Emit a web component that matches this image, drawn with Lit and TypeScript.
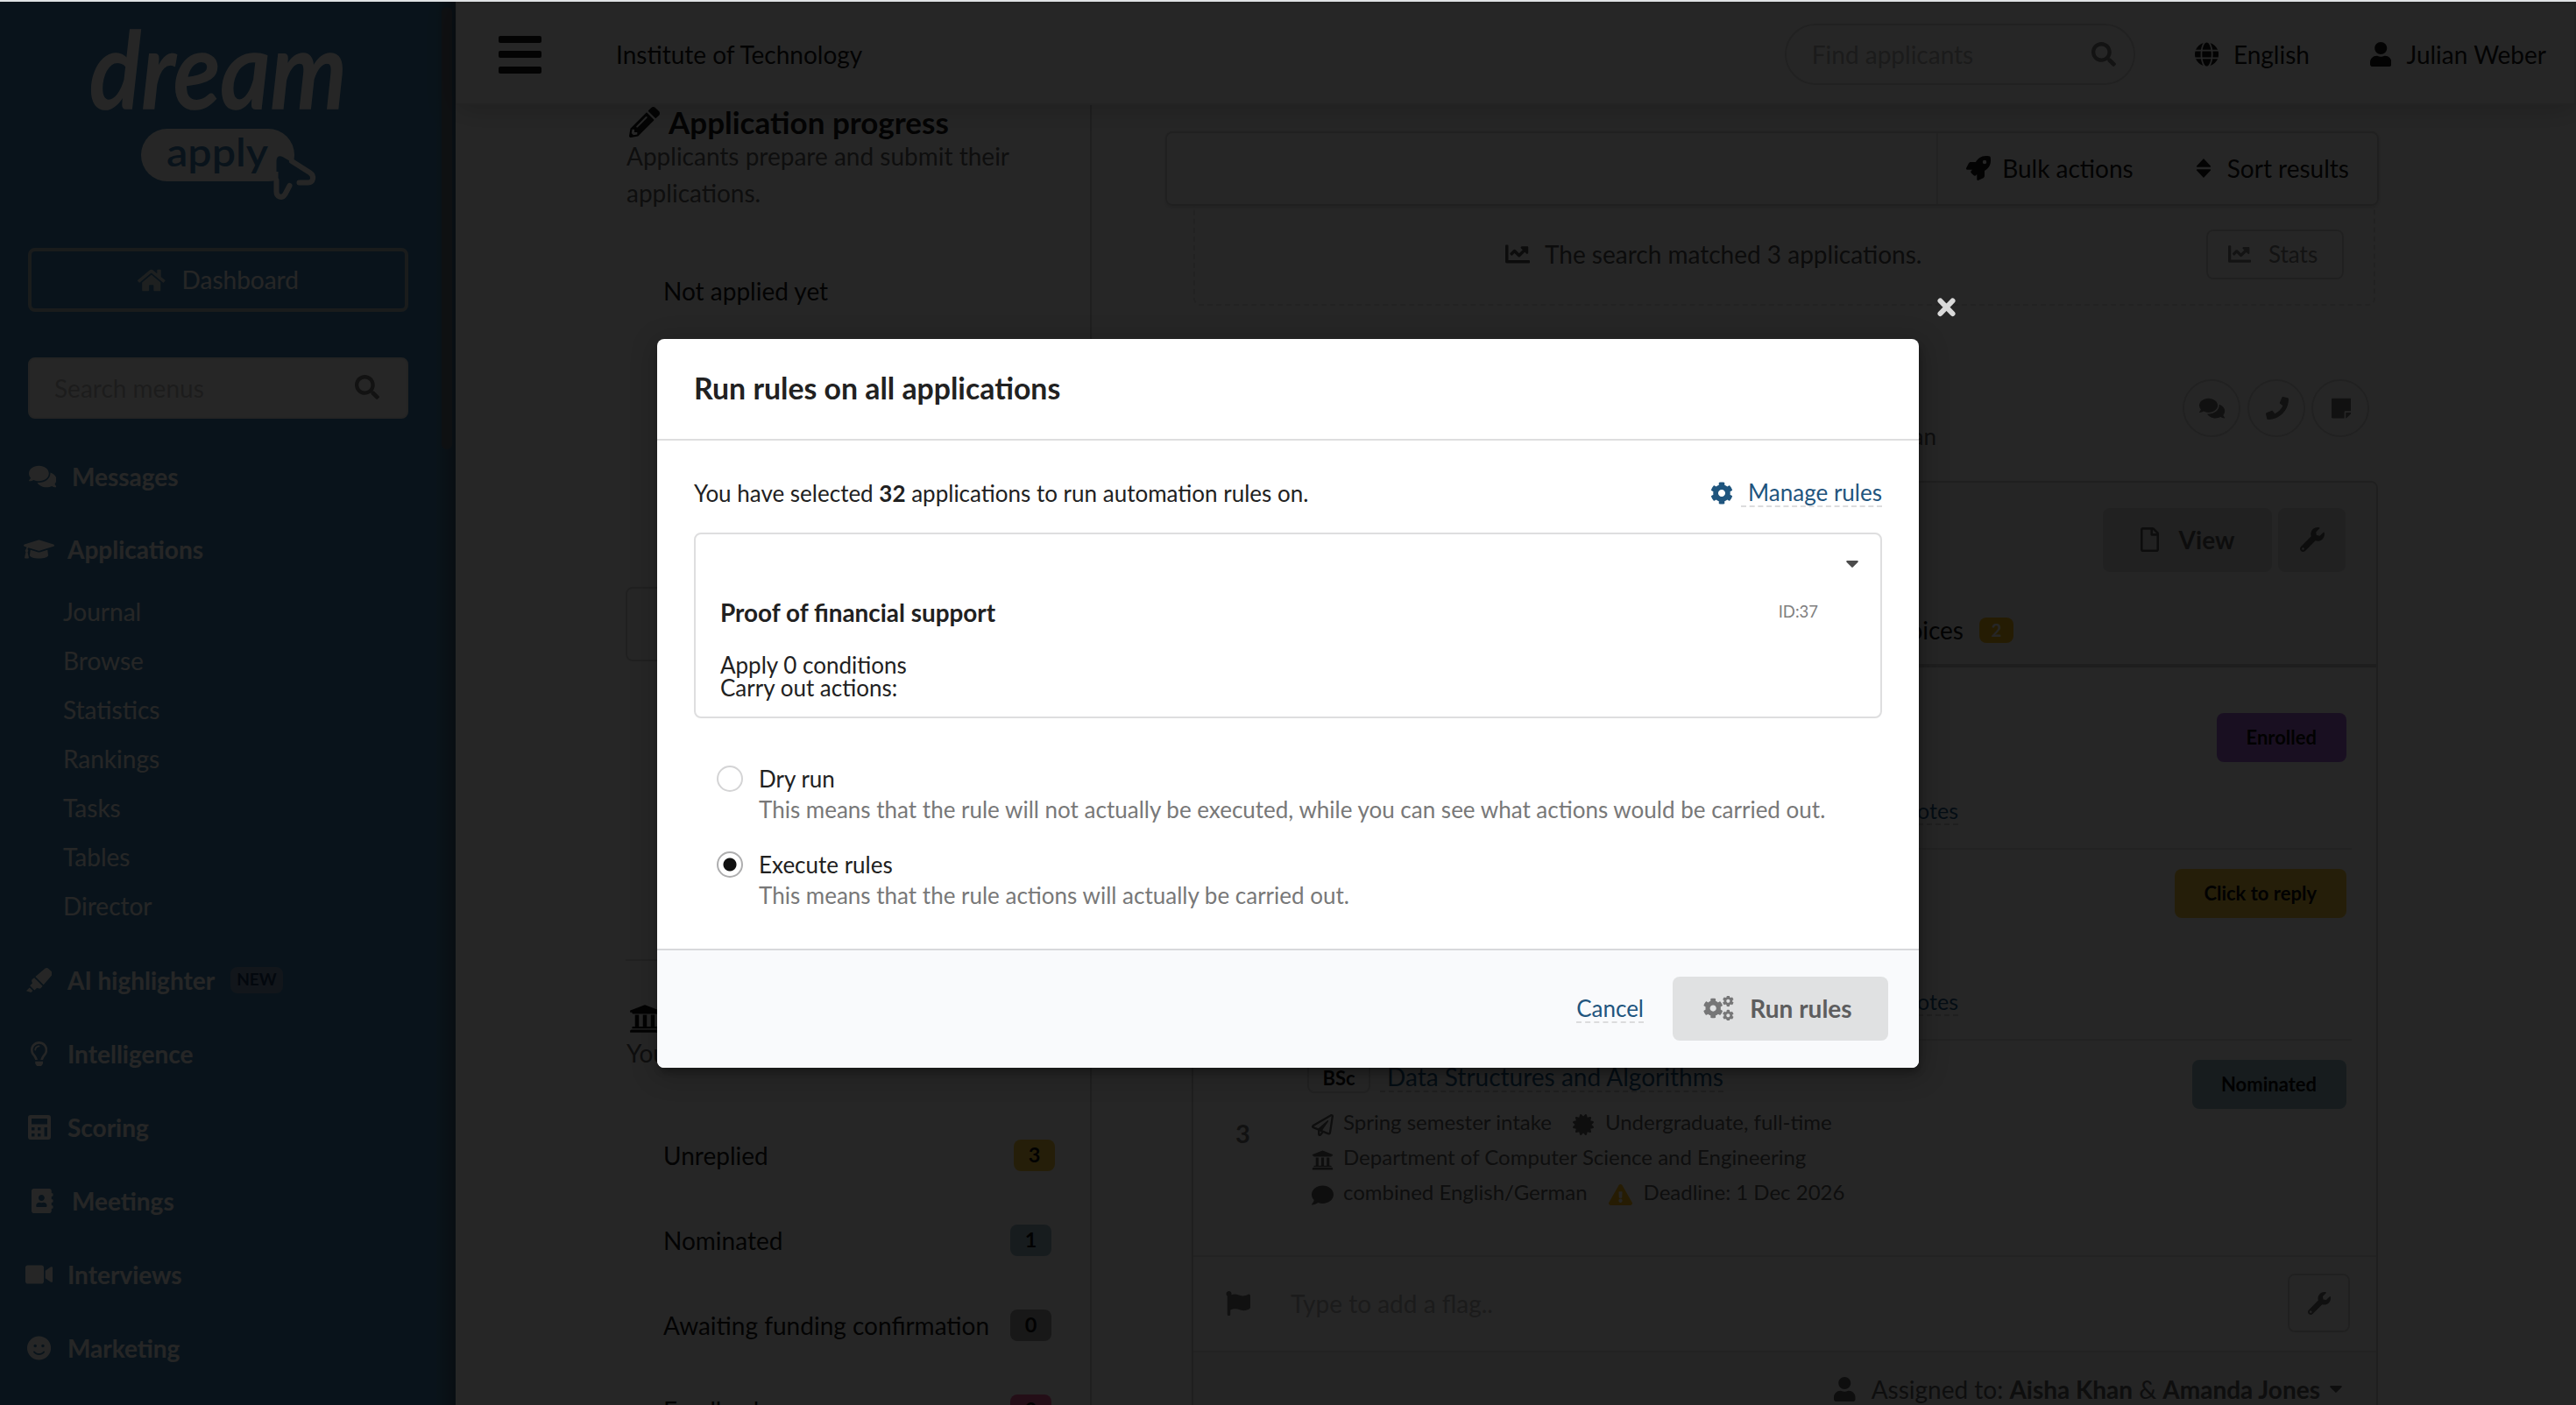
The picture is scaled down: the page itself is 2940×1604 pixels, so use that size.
import { LitElement, html, css, svg, nothing } from "lit";
import { customElement, property } from "lit/decorators.js";

const COG =
  "M487.4 315.7l-42.6-24.6c4.3-23.2 4.3-47 0-70.2l42.6-24.6c4.9-2.8 7.1-8.6 5.5-14-11.1-35.6-30-67.8-54.7-94.6-3.8-4.1-10-5.1-14.8-2.3L380.8 110c-17.9-15.4-38.5-27.3-60.8-35.1V25.8c0-5.6-3.9-10.5-9.4-11.7-36.7-8.2-74.3-7.8-109.2 0-5.5 1.2-9.4 6.1-9.4 11.7V75c-22.2 7.9-42.8 19.8-60.8 35.1L88.7 85.5c-4.9-2.8-11-1.9-14.8 2.3-24.7 26.7-43.6 58.9-54.7 94.6-1.7 5.4.6 11.2 5.5 14L67.3 221c-4.3 23.2-4.3 47 0 70.2l-42.6 24.6c-4.9 2.8-7.1 8.6-5.5 14 11.1 35.6 30 67.8 54.7 94.6 3.8 4.1 10 5.1 14.8 2.3l42.6-24.6c17.9 15.4 38.5 27.3 60.8 35.1v49.2c0 5.6 3.9 10.5 9.4 11.7 36.7 8.2 74.3 7.8 109.2 0 5.5-1.2 9.4-6.1 9.4-11.7v-49.2c22.2-7.9 42.8-19.8 60.8-35.1l42.6 24.6c4.9 2.8 11 1.9 14.8-2.3 24.7-26.7 43.6-58.9 54.7-94.6 1.5-5.5-.7-11.3-5.6-14.1zM256 336c-44.1 0-80-35.9-80-80s35.9-80 80-80 80 35.9 80 80-35.9 80-80 80z";

/* name -> [viewBox, path data] */
const ICONS: Record<string, [string, string]> = {
  search: ["0 0 512 512", "M505 442.7L405.3 343c-4.5-4.5-10.6-7-17-7H372c27.6-35.3 44-79.7 44-128C416 93.1 322.9 0 208 0S0 93.1 0 208s93.1 208 208 208c48.3 0 92.7-16.4 128-44v16.3c0 6.4 2.5 12.5 7 17l99.7 99.7c9.4 9.4 24.6 9.4 33.9 0l28.3-28.3c9.4-9.4 9.4-24.6.1-34zM208 336c-70.7 0-128-57.2-128-128 0-70.7 57.2-128 128-128 70.7 0 128 57.2 128 128 0 70.7-57.2 128-128 128z"],
  user: ["0 0 448 512", "M224 256c70.7 0 128-57.3 128-128S294.7 0 224 0 96 57.3 96 128s57.3 128 128 128zm89.6 32h-16.7c-22.2 10.2-46.9 16-72.9 16s-50.6-5.8-72.9-16h-16.7C60.2 288 0 348.2 0 422.4V464c0 26.5 21.5 48 48 48h352c26.5 0 48-21.5 48-48v-41.6c0-74.2-60.2-134.4-134.4-134.4z"],
  comments: ["0 0 576 512", "M416 192c0-88.4-93.1-160-208-160S0 103.6 0 192c0 34.3 14.1 65.9 38 92-13.4 30.2-35.5 54.2-35.8 54.5-2.2 2.3-2.8 5.7-1.5 8.7S4.8 352 8 352c36.6 0 66.9-12.3 88.7-25 32.2 15.7 70.3 25 111.3 25 114.9 0 208-71.6 208-160zm122 220c23.9-26 38-57.7 38-92 0-66.9-53.5-124.2-129.3-148.1.9 6.6 1.3 13.3 1.3 20.1 0 105.9-107.7 192-240 192-10.8 0-21.3-.8-31.7-1.9C207.8 439.6 281.8 480 368 480c41 0 79.1-9.2 111.3-25 21.8 12.7 52.1 25 88.7 25 3.2 0 6.1-1.9 7.3-4.8 1.3-2.9.7-6.3-1.5-8.7-.3-.3-22.4-24.2-35.8-54.5z"],
  comment: ["0 0 512 512", "M256 32C114.6 32 0 125.1 0 240c0 49.6 21.4 95 57 130.7C44.5 421.1 2.7 466 2.2 466.5c-2.2 2.3-2.8 5.7-1.5 8.7S4.8 480 8 480c66.3 0 116-31.8 140.6-51.4 32.7 12.3 69 19.4 107.4 19.4 141.4 0 256-93.1 256-208S397.4 32 256 32z"],
  cap: ["0 0 640 512", "M622.34 153.2L343.4 67.5c-15.2-4.67-31.6-4.67-46.79 0L17.66 153.2c-23.54 7.23-23.54 38.36 0 45.59l48.63 14.94c-10.67 13.19-17.23 29.28-17.88 46.9C38.78 266.15 32 276.11 32 288c0 10.78 5.68 19.85 13.86 25.65L20.33 428.53C18.11 438.52 25.71 448 35.94 448h56.11c10.24 0 17.84-9.48 15.62-19.47L82.14 313.65C90.32 307.85 96 298.78 96 288c0-11.57-6.47-21.25-15.66-26.87.76-15.02 8.44-28.3 20.69-36.72L296.6 284.5c9.06 2.78 26.44 6.25 46.79 0l278.95-85.7c23.55-7.24 23.55-38.36 0-45.6zM352.79 315.09c-28.53 8.76-52.84 3.92-65.59 0l-145.02-44.55L128 384c0 35.35 85.96 64 192 64s192-28.65 192-64l-14.18-113.47-145.03 44.56z"],
  home: ["0 0 576 512", "M280.37 148.26L96 300.11V464a16 16 0 0 0 16 16l112.06-.29a16 16 0 0 0 15.92-16V368a16 16 0 0 1 16-16h64a16 16 0 0 1 16 16v95.64a16 16 0 0 0 16 16.05L464 480a16 16 0 0 0 16-16V300L295.67 148.26a12.19 12.19 0 0 0-15.3 0zM571.6 251.47L488 182.56V44.05a12 12 0 0 0-12-12h-56a12 12 0 0 0-12 12v72.61L318.47 43a48 48 0 0 0-61 0L4.34 251.47a12 12 0 0 0-1.6 16.9l25.5 31A12 12 0 0 0 45.15 301l235.22-193.74a12.19 12.19 0 0 1 15.3 0L530.9 301a12 12 0 0 0 16.9-1.6l25.5-31a12 12 0 0 0-1.7-16.93z"],
  highlighter: ["0 0 544 512", "M0 479.98L99.92 512l35.45-35.45-67.04-67.04L0 479.98zm124.61-240.01a36.592 36.592 0 0 0-10.79 38.1l13.05 42.83-50.93 50.94 96.23 96.23 50.86-50.86 42.74 13.08c13.73 4.2 28.65-.01 38.15-10.78l35.55-41.64-173.34-173.34-41.52 35.44zm403.31-160.7l-63.2-63.2c-20.49-20.49-53.38-21.52-75.12-2.35L190.55 183.68l169.77 169.78L530.27 154.4c19.18-21.74 18.15-54.63-2.35-75.13z"],
  bulb: ["0 0 352 512", "M176 80c-52.94 0-96 43.06-96 96 0 8.84 7.16 16 16 16s16-7.16 16-16c0-35.3 28.72-64 64-64 8.84 0 16-7.16 16-16s-7.16-16-16-16zM96.06 459.17c0 3.15.93 6.22 2.68 8.84l24.51 36.84c2.97 4.46 7.97 7.14 13.32 7.14h78.85c5.36 0 10.36-2.68 13.32-7.14l24.51-36.84c1.74-2.62 2.67-5.7 2.68-8.84l.05-43.18H96.02l.04 43.18zM176 0C73.72 0 0 82.97 0 176c0 44.37 16.45 84.85 43.56 115.78 16.64 18.99 42.74 58.8 52.42 92.16v.06h48v-.12c-.01-4.77-.72-9.51-2.15-14.07-5.59-17.81-22.82-64.77-62.17-109.67-20.54-23.43-31.52-53.15-31.61-84.14-.2-73.64 59.67-128 127.95-128 70.58 0 128 57.42 128 128 0 30.97-11.24 60.85-31.65 84.14-39.11 44.61-56.42 91.47-62.1 109.46a47.507 47.507 0 0 0-2.22 14.3v.1h48v-.05c9.68-33.37 35.78-73.18 52.42-92.16C335.55 260.85 352 220.37 352 176 352 78.8 273.2 0 176 0z"],
  calculator: ["0 0 26 28", "M3 0h20a3 3 0 0 1 3 3v22a3 3 0 0 1-3 3H3a3 3 0 0 1-3-3V3a3 3 0 0 1 3-3zM4 4v6.500h18V4zM4 14v3.500h3.500V14zM11 14v3.500h3.500V14zM4 21v3.500h3.500V21zM11 21v3.500h3.500V21zM18.500 14v10.500H22V14z"],
  book: ["0 0 448 512", "M436 160c6.6 0 12-5.4 12-12v-40c0-6.600-5.400-12-12-12h-20V48c0-26.500-21.500-48-48-48H48C21.500 0 0 21.500 0 48v416c0 26.500 21.500 48 48 48h320c26.500 0 48-21.500 48-48v-48h20c6.600 0 12-5.400 12-12v-40c0-6.600-5.400-12-12-12h-20v-64h20c6.600 0 12-5.400 12-12v-40c0-6.600-5.400-12-12-12h-20v-64h20zm-228-32c35.300 0 64 28.700 64 64s-28.700 64-64 64-64-28.700-64-64 28.700-64 64-64zm112 236.800c0 10.600-10 19.200-22.400 19.200H118.400C106 384 96 375.400 96 364.800v-19.200c0-31.800 30.100-57.600 67.200-57.600h5c12.300 5.100 25.700 8 39.800 8s27.600-2.900 39.800-8h5c37.100 0 67.200 25.800 67.200 57.600v19.200z"],
  video: ["0 0 576 512", "M336.200 64H47.800C21.400 64 0 85.400 0 111.800v288.400C0 426.600 21.400 448 47.800 448h288.400c26.400 0 47.800-21.400 47.800-47.800V111.800c0-26.400-21.400-47.800-47.800-47.800zm189.400 37.700L416 177.300v157.400l109.600 75.500c21.200 14.600 50.400-.3 50.400-25.800V127.500c0-25.400-29.100-40.400-50.400-25.800z"],
  smile: ["0 0 496 512", "M248 8C111 8 0 119 0 256s111 248 248 248 248-111 248-248S385 8 248 8zm80 168c17.700 0 32 14.300 32 32s-14.300 32-32 32-32-14.300-32-32 14.300-32 32-32zm-160 0c17.700 0 32 14.300 32 32s-14.300 32-32 32-32-14.300-32-32 14.300-32 32-32zm194.800 170.200C334.300 380.400 292.500 400 248 400s-86.300-19.600-114.800-53.800c-13.600-16.300 11-36.700 24.600-20.500 22.400 26.900 55.200 42.200 90.200 42.200s67.800-15.400 90.200-42.200c13.400-16.200 38.100 4.200 24.600 20.500z"],
  phone: ["0 0 512 512", "M493.400 24.600l-104-24c-11.300-2.600-22.900 3.300-27.500 13.900l-48 112c-4.200 9.800-1.400 21.300 6.900 28l60.600 49.600c-36 76.700-98.900 140.500-177.200 177.200l-49.600-60.600c-6.800-8.300-18.200-11.100-28-6.900l-112 48C3.900 366.500-2 378.100.6 389.400l24 104C27.100 504.200 36.700 512 48 512c256.100 0 464-207.500 464-464 0-11.200-7.700-20.900-18.600-23.400z"],
  note: ["0 0 448 512", "M312 320h136V56c0-13.300-10.700-24-24-24H24C10.700 32 0 42.700 0 56v400c0 13.300 10.700 24 24 24h264V344c0-13.200 10.800-24 24-24zm129 55l-98 98c-4.500 4.500-10.600 7-17 7h-6V352h128v6.100c0 6.300-2.500 12.400-7 16.900z"],
  wrench: ["0 0 512 512", "M507.730 109.100c-2.240-9.030-13.540-12.090-20.120-5.510l-74.360 74.360-67.880-11.310-11.310-67.880 74.360-74.360c6.620-6.620 3.430-17.900-5.660-20.160-47.380-11.740-99.550.91-136.580 37.930-39.640 39.640-50.550 97.100-34.050 147.200L18.740 402.760c-24.990 24.990-24.990 65.510 0 90.500 24.990 24.990 65.510 24.990 90.500 0l213.210-213.210c50.120 16.710 107.470 5.680 147.370-34.220 37.070-37.070 49.700-89.320 37.910-136.730zM64 472c-13.250 0-24-10.750-24-24 0-13.260 10.750-24 24-24s24 10.740 24 24c0 13.250-10.750 24-24 24z"],
  cog: ["0 0 512 512", COG],
  rocket: ["0 0 512 512", "M505.120 19.094c-1.189-5.531-6.658-11-12.207-12.188C460.716 0 435.507 0 410.407 0 307.175 0 245.269 55.203 199.052 128H94.838c-16.348.016-35.557 11.875-42.887 26.484L2.516 253.297A28.400 28.400 0 0 0 0 264a24.009 24.009 0 0 0 24.006 24h103.810l-22.474 22.469c-11.366 11.361-12.997 32.258 0 45.250l50.904 50.906c11.156 11.188 32.156 13.156 45.277 0l22.475-22.469V488a24.009 24.009 0 0 0 24.006 24 28.559 28.559 0 0 0 10.707-2.516l98.728-49.391c14.629-7.297 26.508-26.500 26.508-42.859V312.797c72.598-46.313 128.035-108.406 128.035-211.094.093-25.203.093-50.406-6.862-82.609zM384.040 168a40 40 0 1 1 40.010-40 40.023 40.023 0 0 1-40.010 40z"],
  globe: ["0 0 496 512", "M336.500 160C322 70.700 287.800 8 248 8s-74 62.700-88.500 152h177zM152 256c0 22.200 1.200 43.500 3.300 64h185.300c2.100-20.500 3.300-41.800 3.300-64s-1.200-43.500-3.300-64H155.300c-2.100 20.500-3.300 41.800-3.300 64zm324.700-96c-28.600-67.900-86.500-120.400-158-141.600 24.400 33.800 41.200 84.700 50 141.600h108zM177.200 18.400C105.800 39.600 47.800 92.100 19.300 160h108c8.700-56.900 25.500-107.800 49.900-141.600zM487.400 192H372.700c2.100 21 3.300 42.500 3.300 64s-1.200 43-3.300 64h114.600c5.500-20.500 8.600-41.800 8.600-64s-3.100-43.500-8.500-64zM120 256c0-21.500 1.200-43 3.300-64H8.600C3.200 212.500 0 233.800 0 256s3.200 43.500 8.600 64h114.600c-2-21-3.200-42.500-3.200-64zm39.500 96c14.500 89.300 48.700 152 88.500 152s74-62.700 88.500-152h-177zm159.300 141.600c71.400-21.200 129.400-73.700 158-141.600h-108c-8.800 56.900-25.600 107.800-50 141.600zM19.300 352c28.600 67.900 86.500 120.400 158 141.600-24.400-33.800-41.200-84.700-50-141.600h-108z"],
  chart: ["0 0 512 512", "M496 384H64V80c0-8.840-7.160-16-16-16H16C7.160 64 0 71.160 0 80v336c0 17.670 14.330 32 32 32h464c8.840 0 16-7.160 16-16v-32c0-8.840-7.160-16-16-16zM464 96H345.940c-21.380 0-32.090 25.850-16.970 40.970l32.400 32.400L288 242.750l-73.370-73.370c-12.500-12.500-32.760-12.500-45.250 0l-68.690 68.690c-6.250 6.250-6.250 16.380 0 22.630l22.620 22.620c6.250 6.250 16.380 6.250 22.630 0L192 237.250l73.370 73.370c12.500 12.500 32.760 12.500 45.250 0l96-96 32.400 32.400c15.120 15.120 40.970 4.410 40.970-16.970V112c.01-8.840-7.150-16-15.990-16z"],
  university: ["0 0 512 512", "M496 128v16a8 8 0 0 1-8 8h-24v12c0 6.627-5.373 12-12 12H60c-6.627 0-12-5.373-12-12v-12H24a8 8 0 0 1-8-8v-16a8 8 0 0 1 4.941-7.392l232-88a7.996 7.996 0 0 1 6.118 0l232 88A8 8 0 0 1 496 128zm-24 304H40c-13.255 0-24 10.745-24 24v16a8 8 0 0 0 8 8h464a8 8 0 0 0 8-8v-16c0-13.255-10.745-24-24-24zM96 192v192H60c-6.627 0-12 5.373-12 12v20h416v-20c0-6.627-5.373-12-12-12h-36V192h-64v192h-64V192h-64v192h-64V192H96z"],
  warning: ["0 0 576 512", "M569.517 440.013C587.975 472.007 564.806 512 527.940 512H48.054c-36.937 0-59.999-40.055-41.577-71.987L246.423 23.985c18.467-32.009 64.720-31.951 83.154 0l239.940 416.028zM288 354c-25.405 0-46 20.595-46 46s20.595 46 46 46 46-20.595 46-46-20.595-46-46-46zm-43.673-165.346l7.418 136c.347 6.364 5.609 11.346 11.982 11.346h48.546c6.373 0 11.635-4.982 11.982-11.346l7.418-136c.375-6.874-5.098-12.654-11.982-12.654h-63.383c-6.884 0-12.356 5.780-11.981 12.654z"],
  certificate: ["0 0 512 512", "M458.622 255.920l45.985-45.005c13.708-12.977 7.316-36.039-10.664-40.339l-62.650-15.990 17.661-62.015c4.991-17.838-11.829-34.663-29.661-29.671l-61.994 17.667-15.984-62.671C337.085.197 313.765-6.276 300.990 7.228L256 53.570 211.011 7.229c-12.630-13.351-36.047-7.234-40.325 10.668l-15.984 62.671-61.995-17.667C74.870 57.907 58.056 74.738 63.046 92.572l17.661 62.015-62.650 15.990C.069 174.878-6.310 197.944 7.392 210.915l45.985 45.005-45.985 45.004c-13.708 12.977-7.316 36.039 10.664 40.339l62.650 15.990-17.661 62.015c-4.991 17.838 11.829 34.663 29.661 29.671l61.994-17.667 15.984 62.671c4.439 18.575 27.696 24.018 40.325 10.668L256 458.610l44.989 46.001c12.500 13.488 35.987 7.486 40.325-10.668l15.984-62.671 61.994 17.667c17.836 4.994 34.651-11.837 29.661-29.671l-17.661-62.015 62.650-15.990c17.987-4.302 24.366-27.367 10.664-40.339l-45.984-45.004z"],
  flag: ["0 0 512 512", "M349.565 98.783C295.978 98.783 251.721 64 184.348 64c-24.955 0-47.309 4.384-68.045 12.013a55.947 55.947 0 0 0 3.586-23.562C118.117 24.015 94.806 1.206 66.338.048 34.345-1.254 8 24.296 8 56c0 19.026 9.497 35.825 24 45.945V488c0 13.255 10.745 24 24 24h16c13.255 0 24-10.745 24-24v-94.400c28.311-12.064 63.582-22.122 114.435-22.122 53.588 0 97.844 34.783 165.217 34.783 48.169 0 86.667-16.294 122.505-40.858C506.840 359.452 512 349.571 512 339.045v-243.100c0-23.393-24.269-38.870-45.485-29.016-34.338 15.948-76.454 31.854-116.950 31.854z"],
  plane: ["0 0 512 512", "M440 6.500L24 246.400c-34.400 19.900-31.100 70.800 5.700 85.900L144 379.600V464c0 46.400 59.200 65.500 86.600 28.600l43.800-59.100 111.900 46.200c5.900 2.400 12.100 3.600 18.300 3.600 8.200 0 16.300-2.100 23.600-6.200 12.800-7.200 21.600-20 23.900-34.500l59.400-387.200c6.100-40.100-36.900-68.800-71.500-48.900zM192 464v-64.600l36.600 15.100L192 464zm212.600-28.700l-153.800-63.500L391 169.500c10.700-15.500-9.500-33.500-23.700-21.200L155.800 332.600 48 288 464 48l-59.400 387.300z"],
  file: ["0 0 384 512", "M369.900 97.900L286 14C277 5 264.800 0 252.100 0H48C21.500 0 0 21.500 0 48v416c0 26.500 21.500 48 48 48h288c26.500 0 48-21.500 48-48V131.900c0-12.700-5.100-25-14.100-34zM332.100 128H256V51.900l76.100 76.100zM48 464V48h160v104c0 13.300 10.700 24 24 24h104v288H48z"],
  pencil: ["0 0 512 512", "M497.900 142.100l-46.100 46.100c-4.700 4.700-12.300 4.700-17 0l-111-111c-4.700-4.700-4.700-12.300 0-17l46.100-46.100c18.700-18.700 49.100-18.700 67.900 0l60.100 60.100c18.800 18.700 18.800 49.100 0 67.900zM284.200 99.800L21.600 362.400.4 483.900c-2.900 16.400 11.400 30.600 27.800 27.800l121.500-21.300 262.600-262.600c4.700-4.700 4.700-12.300 0-17l-111-111c-4.800-4.700-12.400-4.700-17.100 0zM124.100 339.900c-5.500-5.500-5.500-14.300 0-19.800l154-154c5.500-5.500 14.300-5.500 19.800 0s5.500 14.300 0 19.800l-154 154c-5.500 5.500-14.300 5.500-19.800 0zM88 424h48v36.300l-64.500 11.300-31.100-31.100L51.700 376H88v48z"],
  sort: ["0 0 18 22", "M9 0l8 8.500a.8.8 0 0 1-.6 1.300H1.600A.8.8 0 0 1 1 8.500zM9 22l8-8.500a.8.8 0 0 0-.6-1.300H1.600a.8.8 0 0 0-.6 1.300z"],
  caret: ["0 0 14 8", "M1.200 0h11.600a1 1 0 0 1 .7 1.700L7.700 7.600a1 1 0 0 1-1.400 0L.5 1.700A1 1 0 0 1 1.200 0z"],
};

@customElement("da-icon")
export class DaIcon extends LitElement {
  static styles = css`
    :host {
      display: inline-flex;
      flex: none;
      line-height: 0;
    }
    svg {
      display: block;
      fill: currentColor;
      fill-rule: evenodd;
    }
  `;
  @property() name = "";
  @property({ type: Number }) size = 28;

  render() {
    if (this.name === "cogs") {
      return html`<svg width=${this.size * 1.25} height=${this.size} viewBox="0 0 640 512">
        ${svg`<path transform="translate(-8 44) scale(.83)" d=${COG}></path>
        <path transform="translate(398 -14) scale(.47)" d=${COG}></path>
        <path transform="translate(398 286) scale(.47)" d=${COG}></path>`}
      </svg>`;
    }
    const def = ICONS[this.name];
    if (!def) return nothing;
    const [, , w, h] = def[0].split(" ").map(Number);
    return html`<svg width=${(this.size * w) / h} height=${this.size} viewBox=${def[0]}>
      <path d=${def[1]}></path>
    </svg>`;
  }
}

interface MenuItem {
  icon: string;
  label: string;
  size?: number;
  inset?: boolean;
  badge?: string;
}

const TOP_MENU: MenuItem[] = [
  { icon: "comments", label: "Messages", inset: true },
  { icon: "cap", label: "Applications" },
];
const SUB_MENU = ["Journal", "Browse", "Statistics", "Rankings", "Tasks", "Tables", "Director"];
const MENU: MenuItem[] = [
  { icon: "highlighter", label: "AI highlighter", badge: "NEW" },
  { icon: "bulb", label: "Intelligence" },
  { icon: "calculator", label: "Scoring" },
  { icon: "book", label: "Meetings", inset: true },
  { icon: "video", label: "Interviews" },
  { icon: "smile", label: "Marketing" },
];

@customElement("da-sidebar")
export class DaSidebar extends LitElement {
  static styles = css`
    :host {
      display: flex;
      height: 1602px;
      background: #3d83b2;
      color: #fff;
      font-size: 28px;
      line-height: 34px;
    }
    .body {
      width: 498px;
      box-sizing: border-box;
      padding: 0 32px 0;
    }
    .rail {
      width: 22px;
      box-sizing: border-box;
      padding: 6px 4px 0 6px;
      background: linear-gradient(90deg, #4283ad, #3a5d7c);
    }
    .thumb {
      height: 505px;
      border-radius: 6px;
      background: #616d7b;
    }
    .logo {
      display: block;
      margin-left: 68px;
      overflow: visible;
    }
    .dream {
      font: italic 600 114px "Lato", "Open Sans", sans-serif;
      fill: #fff;
      stroke: #fff;
      stroke-width: 1.500px;
    }
    .apply {
      font: 600 45px "Lato", "Open Sans", sans-serif;
      fill: #3d83b2;
    }
    .dash {
      display: flex;
      align-items: center;
      justify-content: center;
      box-sizing: border-box;
      width: 434px;
      height: 73px;
      margin-top: 47px;
      border: 4px solid #aeb9bd;
      border-radius: 8px;
      gap: 19px;
    }
    .dash span {
      margin-top: -2px;
    }
    .dash da-icon {
      color: #c9d6d8;
    }
    .find {
      display: flex;
      align-items: center;
      justify-content: space-between;
      box-sizing: border-box;
      width: 434px;
      height: 70px;
      margin-top: 52px;
      padding: 0 31px 0 28px;
      border-radius: 8px;
      border: 2px solid #efefef;
      background: #fff;
      color: #bebebe;
    }
    .find span {
      margin-top: -1px;
    }
    .find da-icon {
      color: #777;
      margin-top: -3px;
    }
    nav {
      padding-top: 24px;
      margin-left: -8px;
    }
    .item {
      display: flex;
      align-items: center;
      height: 84px;
      font-weight: 700;
    }
    .item.short {
      height: 83px;
    }
    .slot {
      display: flex;
      justify-content: center;
      width: 41px;
      margin-right: 12px;
    }
    .inset .slot {
      margin-left: 4px;
      margin-right: 13px;
    }
    .sub {
      display: flex;
      flex-direction: column;
      padding: 2px 0 15px 48px;
    }
    .sub span {
      height: 56px;
      line-height: 56px;
    }
    .new {
      margin-left: 18px;
      padding: 0 7px;
      height: 30px;
      line-height: 28px;
      border-radius: 8px;
      background: #7a92b4;
      color: #153760;
      font-size: 19px;
    }
  `;

  private item(m: MenuItem, cls = "") {
    return html`<div class="item ${cls} ${m.inset ? "inset" : ""}">
      <span class="slot"><da-icon name=${m.icon} .size=${m.size ?? 28}></da-icon></span>
      <span>${m.label}</span>
      ${m.badge ? html`<span class="new">${m.badge}</span>` : nothing}
    </div>`;
  }

  render() {
    return html`
      <div class="body">
        <svg class="logo" width="300" height="234" viewBox="100 2 300 234">
          <text
            class="dream"
            transform="translate(0 124) scale(1 1.07)"
            x="102"
            y="0"
            textLength="294"
            lengthAdjust="spacingAndGlyphs"
          >dream</text>
          <rect x="161" y="147" width="175" height="60" rx="30" fill="#fff"></rect>
          <text class="apply" x="190" y="190" textLength="116" lengthAdjust="spacingAndGlyphs">apply</text>
          <path
            d="M330.500 212l-5 9.500c-3.500 6-10 3-10-2.500V183.500c0-5 3.500-6.500 7-4.500l31 18c6 4 4 11.500-2 11.500h-10z"
            fill="#3d83b2"
          ></path>
          <path
            d="M330.500 212l-5 9.500c-3.500 6-10 3-10-2.500V206M333 184l20.500 13c6 4 4 11.500-2 11.500h-10"
            fill="none"
            stroke="#fff"
            stroke-width="6"
            stroke-linecap="round"
            stroke-linejoin="round"
          ></path>
          <path d="M312.500 206v-10l5 0v12z" fill="#fff"></path>
        </svg>
        <div class="dash"><da-icon name="home"></da-icon><span>Dashboard</span></div>
        <div class="find"><span>Search menus</span><da-icon name="search"></da-icon></div>
        <nav>
          ${TOP_MENU.map((m) => this.item(m, "short"))}
          <div class="sub">${SUB_MENU.map((s) => html`<span>${s}</span>`)}</div>
          ${MENU.map((m) => this.item(m))}
        </nav>
      </div>
      <div class="rail"><div class="thumb"></div></div>
    `;
  }
}

@customElement("da-topbar")
export class DaTopbar extends LitElement {
  static styles = css`
    :host {
      display: flex;
      align-items: center;
      position: relative;
      z-index: 1;
      box-sizing: border-box;
      height: 118px;
      padding: 2px 32px 0 48px;
      background: #fff;
      border: 2px solid #eaeaea;
      border-left-width: 1px;
      box-shadow: 0 6px 30px rgba(34, 36, 38, 0.22);
      color: #161616;
      font-size: 28px;
      line-height: 34px;
    }
    .burger {
      display: flex;
      flex-direction: column;
      gap: 9.500px;
      width: 49px;
      margin-right: 85px;
    }
    .burger i {
      height: 8px;
      border-radius: 2px;
      background: #161616;
    }
    .grow {
      flex: 1;
    }
    .find {
      display: flex;
      align-items: center;
      justify-content: space-between;
      box-sizing: border-box;
      width: 400px;
      height: 70px;
      margin-right: 68px;
      padding: 0 20px 0 29px;
      border: 2px solid #d9d9d9;
      border-radius: 35px;
      color: #b2b2b2;
    }
    .find da-icon {
      color: #7d7d7d;
    }
    .lang {
      display: flex;
      align-items: center;
      gap: 17px;
      margin-right: 69px;
    }
    .lang.me {
      margin-right: 0;
    }
  `;

  render() {
    return html`
      <div class="burger"><i></i><i></i><i></i></div>
      <span>Institute of Technology</span>
      <div class="grow"></div>
      <div class="find"><span>Find applicants</span><da-icon name="search"></da-icon></div>
      <div class="lang"><da-icon name="globe"></da-icon><span>English</span></div>
      <div class="lang me"><da-icon name="user"></da-icon><span>Julian Weber</span></div>
    `;
  }
}

@customElement("da-filters")
export class DaFilters extends LitElement {
  static styles = css`
    :host {
      display: block;
      flex: none;
      box-sizing: border-box;
      width: 726px;
      height: 1484px;
      padding-left: 194px;
      border-right: 2px solid #cfcfd0;
      color: #161616;
      font-size: 28px;
      line-height: 42px;
    }
    h2 {
      display: flex;
      align-items: center;
      gap: 10px;
      height: 38px;
      margin: 0;
      padding-left: 4px;
      font-size: 35px;
      line-height: 38px;
    }
    p {
      margin: -1px 0 0 1px;
      width: 470px;
      color: #616161;
    }
    .row {
      display: flex;
      align-items: center;
      justify-content: space-between;
      height: 97px;
      padding: 0 44px 0 43px;
    }
    .row.wide {
      padding-right: 40px;
    }
    .first {
      margin-top: 42px;
    }
    .box {
      box-sizing: border-box;
      width: 500px;
      height: 85px;
      margin-top: 290px;
      border: 2px solid #d4d4d5;
      border-radius: 8px;
    }
    .rule {
      width: 500px;
      height: 2px;
      margin: 340px 0 47px;
      background: #dcdcdc;
    }
    .list {
      margin-top: 47px;
    }
    .tag {
      min-width: 47px;
      height: 36px;
      line-height: 35px;
      border-radius: 8px;
      text-align: center;
      font-size: 23.500px;
      font-weight: 700;
      color: #111;
    }
    .yellow {
      background: #f6cb40;
    }
    .blue {
      background: #99bccb;
    }
    .grey {
      background: #a0a0a0;
    }
    .pink {
      background: #f05c9c;
    }
  `;

  render() {
    const rows: [string, string, string][] = [
      ["Unreplied", "3", "yellow"],
      ["Nominated", "1", "blue"],
      ["Awaiting funding confirmation", "0", "grey"],
      ["Feedback", "0", "pink"],
    ];
    return html`
      <h2><da-icon name="pencil" .size=${35}></da-icon>Application progress</h2>
      <p>Applicants prepare and submit their applications.</p>
      <div class="row first"><span>Not applied yet</span></div>
      <div class="box"></div>
      <div class="rule"></div>
      <h2><da-icon name="university" .size=${36}></da-icon></h2>
      <p>You</p>
      <div class="list">
        ${rows.map(
          ([label, n, tone], i) => html`<div class="row ${i === 0 ? "wide" : ""}">
            <span>${label}</span><span class="tag ${tone}">${n}</span>
          </div>`
        )}
      </div>
    `;
  }
}

@customElement("da-results")
export class DaResults extends LitElement {
  static styles = css`
    :host {
      display: block;
      flex: 1;
      height: 1484px;
      overflow: hidden;
      color: #161616;
      font-size: 28px;
      line-height: 34px;
    }
    .toolbar {
      display: flex;
      justify-content: flex-end;
      box-sizing: border-box;
      width: 1385px;
      height: 85px;
      margin: 30px 0 0 84px;
      border: 2px solid #d6d6d7;
      border-radius: 8px;
      box-shadow: 0 2px 4px rgba(34, 36, 38, 0.15);
    }
    .tools {
      display: flex;
      align-items: center;
      border-left: 2px solid #e3e3e3;
      padding: 0 32px 2px 32px;
    }
    .tools span {
      margin-left: 13px;
    }
    .tools .gap {
      margin: 0 5px 0 71px;
    }
    .summary {
      display: grid;
      grid-template-columns: 354px 1fr auto;
      align-items: center;
      box-sizing: border-box;
      width: 1349px;
      height: 114px;
      margin-left: 116px;
      padding: 0 34px 2px 0;
      border: 2px dashed #e3e3e3;
      border-top: 0;
      border-radius: 0 0 8px 8px;
      color: #505050;
    }
    .match {
      display: flex;
      align-items: center;
      gap: 17px;
    }
    .btn {
      display: flex;
      align-items: center;
      box-sizing: border-box;
      border: 2px solid #d8d8d8;
      border-radius: 8px;
    }
    .stats {
      width: 157px;
      height: 57px;
      padding-left: 23px;
      gap: 20px;
      color: #808080;
      font-size: 26px;
    }
    .applicant {
      display: grid;
      grid-template-columns: 850px 1fr;
      height: 200px;
      width: 1354px;
      margin-left: 114px;
    }
    .applicant p {
      margin: 132px 0 0;
      text-align: right;
      font-size: 26px;
      color: #606060;
    }
    .rounds {
      display: flex;
      justify-content: flex-end;
      gap: 7.500px;
      padding: 84px 10px 0 0;
    }
    .round {
      display: flex;
      align-items: center;
      justify-content: center;
      box-sizing: border-box;
      width: 66px;
      height: 66px;
      padding-left: 2px;
      border: 2px solid #d9d9d9;
      border-radius: 50%;
      color: #707070;
    }
    .card {
      box-sizing: border-box;
      width: 1354px;
      height: 1100px;
      margin-left: 114px;
      border: 2px solid #cfcfd0;
      border-radius: 8px;
      overflow: hidden;
    }
    .head {
      display: grid;
      grid-template-columns: 1fr auto;
      box-sizing: border-box;
      height: 211px;
      padding: 29px 35px 0 0;
      border-bottom: 4px solid #c9c9ca;
      background: #f6f6f7;
    }
    .pair {
      display: flex;
      gap: 7px;
    }
    .grey {
      display: flex;
      align-items: center;
      justify-content: center;
      box-sizing: border-box;
      height: 73px;
      padding-bottom: 2px;
      border-radius: 8px;
      background: #dcdddd;
      font-weight: 700;
      color: #5a5a5a;
    }
    .view {
      width: 193px;
      gap: 23px;
    }
    .tool {
      width: 77px;
    }
    .tabs {
      grid-column: 1 / 3;
      display: flex;
      align-items: center;
      justify-content: flex-end;
      width: 936px;
      height: 36px;
      gap: 18px;
      margin-top: 27px;
    }
    .two {
      width: 39px;
      height: 29px;
      line-height: 29px;
      border-radius: 8px;
      text-align: center;
      background: #f7b818;
      color: #fff;
      font-size: 20px;
      font-weight: 700;
    }
    .choice {
      display: grid;
      grid-template-columns: 82px 1fr auto;
      box-sizing: border-box;
      margin: 0 28px;
      padding: 0 6px 0 0;
      border-bottom: 2px solid #e0e0e0;
    }
    .c1 {
      height: 208px;
    }
    .c2 {
      height: 218px;
    }
    .c3 {
      height: 245px;
      border: 0;
    }
    .notes {
      width: 763px;
      text-align: right;
      font-size: 25px;
    }
    .notes a {
      border-bottom: 2px dashed #d0d0d0;
      color: #1f5b86;
    }
    .c1 .notes {
      padding-top: 146px;
    }
    .c2 .notes {
      padding-top: 156px;
    }
    .status {
      display: flex;
      align-items: center;
      height: 56px;
      padding: 0 34px 0 33px;
      margin-top: 22px;
      border-radius: 8px;
      font-size: 22px;
      font-weight: 700;
      color: #0c0c0c;
    }
    .c1 .status {
      margin-top: 52px;
    }
    .purple {
      background: #aa68de;
    }
    .yellow {
      background: #f6cb40;
    }
    .blue {
      background: #99bccb;
    }
    .no {
      padding: 89px 0 0 20px;
      font-size: 29px;
      font-weight: 700;
      color: #727272;
    }
    .title {
      display: flex;
      align-items: center;
      height: 40px;
      padding: 22px 0 11px 20px;
    }
    .bsc {
      box-sizing: border-box;
      width: 72px;
      height: 36px;
      line-height: 34px;
      margin-right: 11px;
      border: 2px solid #dadada;
      border-radius: 8px;
      text-align: center;
      font-size: 22px;
      font-weight: 700;
    }
    .title a {
      padding-left: 8px;
      line-height: 31px;
      border-bottom: 2px dashed #d0d0d0;
      font-size: 28px;
      color: #1f5b86;
    }
    .meta {
      display: flex;
      align-items: center;
      height: 40px;
      padding-left: 25px;
      font-size: 24px;
      color: #5e5e5e;
    }
    .meta da-icon {
      margin: 6px 11px 0 0;
    }
    .meta da-icon.next {
      margin-left: 24px;
      margin-right: 13px;
    }
    .meta .amber {
      color: #fdbb16;
    }
    .flags {
      display: flex;
      align-items: center;
      height: 111px;
      box-sizing: border-box;
      border-top: 2px solid #e0e0e0;
      border-bottom: 2px solid #e0e0e0;
      padding: 0 30px 2px 37px;
      color: #707070;
    }
    .flags span {
      flex: 1;
      margin-left: 46px;
      color: #b2b2b2;
    }
    .edit {
      justify-content: center;
      width: 71px;
      height: 67px;
      color: #6a6a6a;
    }
    .foot {
      display: flex;
      align-items: center;
      justify-content: flex-end;
      height: 84px;
      padding-right: 39px;
      background: #f6f6f7;
      color: #606060;
    }
    .foot span {
      margin: 0 11px 0 18px;
    }
  `;

  render() {
    return html`
      <div class="toolbar">
        <div class="tools">
          <da-icon name="rocket"></da-icon><span>Bulk actions</span>
          <da-icon class="gap" name="sort" .size=${22}></da-icon><span>Sort results</span>
        </div>
      </div>
      <div class="summary">
        <i></i>
        <div class="match">
          <da-icon name="chart"></da-icon><span>The search matched 3 applications.</span>
        </div>
        <div class="btn stats"><da-icon name="chart" .size=${26}></da-icon>Stats</div>
      </div>
      <div class="applicant">
        <p>German</p>
        <div class="rounds">
          <div class="round"><da-icon name="comments" .size=${26}></da-icon></div>
          <div class="round"><da-icon name="phone" .size=${26}></da-icon></div>
          <div class="round"><da-icon name="note" .size=${26}></da-icon></div>
        </div>
      </div>
      <div class="card">
        <div class="head">
          <i></i>
          <div class="pair">
            <div class="grey view"><da-icon name="file"></da-icon>View</div>
            <div class="grey tool"><da-icon name="wrench"></da-icon></div>
          </div>
          <div class="tabs"><span>Invoices</span><span class="two">2</span></div>
        </div>
        <div class="choice c1">
          <i></i>
          <div class="notes"><a>Notes</a></div>
          <div><div class="status purple">Enrolled</div></div>
        </div>
        <div class="choice c2">
          <i></i>
          <div class="notes"><a>Notes</a></div>
          <div><div class="status yellow">Click to reply</div></div>
        </div>
        <div class="choice c3">
          <div class="no">3</div>
          <div>
            <div class="title"><span class="bsc">BSc</span><a>Data Structures and Algorithms</a></div>
            <div class="meta">
              <da-icon name="plane" .size=${25}></da-icon>Spring semester intake
              <da-icon class="next" name="certificate" .size=${24}></da-icon>Undergraduate, full-time
            </div>
            <div class="meta">
              <da-icon name="university" .size=${25}></da-icon>Department of Computer Science and Engineering
            </div>
            <div class="meta">
              <da-icon name="comment" .size=${25}></da-icon>combined English/German
              <da-icon class="next amber" name="warning" .size=${24}></da-icon>Deadline: 1 Dec 2026
            </div>
          </div>
          <div><div class="status blue">Nominated</div></div>
        </div>
        <div class="flags">
          <da-icon name="flag"></da-icon><span>Type to add a flag..</span>
          <div class="btn edit"><da-icon name="wrench" .size=${26}></da-icon></div>
        </div>
        <div class="foot">
          <da-icon name="user"></da-icon>
          <span>Assigned to: <b>Aisha Khan</b> &amp; <b>Amanda Jones</b></span>
          <da-icon name="caret" .size=${8}></da-icon>
        </div>
      </div>
    `;
  }
}

@customElement("da-modal")
export class DaModal extends LitElement {
  static styles = css`
    :host {
      display: flex;
      flex-direction: column;
      box-sizing: border-box;
      width: 1440px;
      height: 832px;
      border-radius: 8px;
      background: #fff;
      overflow: hidden;
      color: #212121;
      font-size: 26px;
      line-height: 34px;
    }
    header {
      display: flex;
      align-items: center;
      box-sizing: border-box;
      height: 116px;
      padding: 0 42px 2px;
      border-bottom: 2px solid #dededf;
      font-size: 33.800px;
      font-weight: 700;
    }
    main {
      flex: 1;
      padding: 43px 42px 0;
    }
    .intro {
      display: flex;
      align-items: center;
      height: 34px;
    }
    .intro span {
      flex: 1;
    }
    a {
      border-bottom: 2px dashed #dcdcdd;
      color: #1f557e;
      line-height: 30px;
    }
    .intro da-icon {
      margin-right: 9px;
      color: #1f557e;
    }
    .intro a {
      padding-left: 8px;
    }
    .select {
      display: grid;
      grid-template-columns: 1fr auto;
      grid-template-rows: 40px 50px 1fr;
      box-sizing: border-box;
      height: 212px;
      margin-top: 28px;
      padding: 30px 25px 0 28px;
      border: 2px solid #dededf;
      border-radius: 8px;
    }
    .select da-icon {
      grid-area: 1 / 2;
      color: #4b4b4b;
    }
    .rule {
      grid-area: 2 / 1;
      font-size: 27.900px;
      font-weight: 700;
      padding-top: 2px;
    }
    .id {
      font-size: 18.500px;
      color: #808080;
      padding: 1px 46px 0 0;
      grid-column: 1 / 3;
      grid-row: 2;
      justify-self: end;
    }
    .what {
      grid-area: 3 / 1;
      line-height: 26px;
      padding-top: 16px;
    }
    .opt {
      display: grid;
      grid-template-columns: 30px 1fr;
      column-gap: 18px;
      margin: 52px 0 0 26px;
    }
    .opt + .opt {
      margin-top: 29px;
    }
    .radio {
      box-sizing: border-box;
      width: 30px;
      height: 30px;
      margin-top: 2px;
      border: 2px solid #d4d4d5;
      border-radius: 50%;
    }
    .on {
      border-color: #aeaeaf;
      background: radial-gradient(circle, #111 7px, #fff 8px);
    }
    .opt p {
      grid-column: 2;
      margin: 1px 0 0;
      color: #787878;
    }
    footer {
      display: flex;
      align-items: center;
      justify-content: flex-end;
      box-sizing: border-box;
      height: 136px;
      padding: 0 35px 1px 0;
      border-top: 2px solid #d8d9db;
      background: #f9fafc;
      gap: 33px;
    }
    .run {
      display: flex;
      align-items: center;
      justify-content: center;
      box-sizing: border-box;
      width: 246px;
      height: 73px;
      padding: 0 6px 1px 0;
      gap: 18px;
      border-radius: 8px;
      background: #e0e1e2;
      color: #5d5d5e;
      font-size: 28px;
      font-weight: 700;
    }
    .run da-icon {
      color: #767677;
    }
  `;

  render() {
    return html`
      <header>Run rules on all applications</header>
      <main>
        <div class="intro">
          <span>You have selected <b>32</b> applications to run automation rules on.</span>
          <da-icon name="cog" .size=${26}></da-icon><a>Manage rules</a>
        </div>
        <div class="select">
          <da-icon name="caret" .size=${8}></da-icon>
          <div class="rule">Proof of financial support</div>
          <div class="id">ID:37</div>
          <div class="what">Apply 0 conditions<br />Carry out actions:</div>
        </div>
        <div class="opt">
          <i class="radio"></i><span>Dry run</span>
          <p>This means that the rule will not actually be executed, while you can see what actions would be carried out.</p>
        </div>
        <div class="opt">
          <i class="radio on"></i><span>Execute rules</span>
          <p>This means that the rule actions will actually be carried out.</p>
        </div>
      </main>
      <footer>
        <a>Cancel</a>
        <div class="run"><da-icon name="cogs"></da-icon>Run rules</div>
      </footer>
    `;
  }
}

@customElement("app-root")
export class AppRoot extends LitElement {
  static styles = css`
    :host {
      display: block;
      position: relative;
      box-sizing: border-box;
      width: 2940px;
      height: 1604px;
      padding-top: 2px;
      overflow: hidden;
      background: #dfe2e4;
      font-family: "Lato", "Liberation Sans", sans-serif;
    }
    .page {
      display: grid;
      grid-template-columns: 520px 1fr;
      height: 1602px;
      background: #fff;
      overflow: hidden;
    }
    .content {
      display: flex;
    }
    .dim {
      position: absolute;
      inset: 2px 0 0 0;
      z-index: 2;
      background: rgba(0, 0, 0, 0.85);
    }
    .modal {
      position: absolute;
      left: 750px;
      top: 387px;
      z-index: 3;
      border-radius: 8px;
      box-shadow: 2px 6px 6px rgba(0, 0, 0, 0.2), 2px 6px 30px 4px rgba(0, 0, 0, 0.2);
    }
    .close {
      position: absolute;
      left: 2210px;
      top: 339px;
      z-index: 3;
    }
  `;

  render() {
    return html`
      <div class="page">
        <da-sidebar></da-sidebar>
        <div>
          <da-topbar></da-topbar>
          <div class="content">
            <da-filters></da-filters>
            <da-results></da-results>
          </div>
        </div>
      </div>
      <div class="dim"></div>
      <da-modal class="modal"></da-modal>
      <svg class="close" width="23" height="24" viewBox="0 0 23 24">
        <path d="M4.500 4.500l14 14.500M18.500 4.500l-14 14.500" stroke="#d9d9d9" stroke-width="6" stroke-linecap="round"></path>
      </svg>
    `;
  }
}
